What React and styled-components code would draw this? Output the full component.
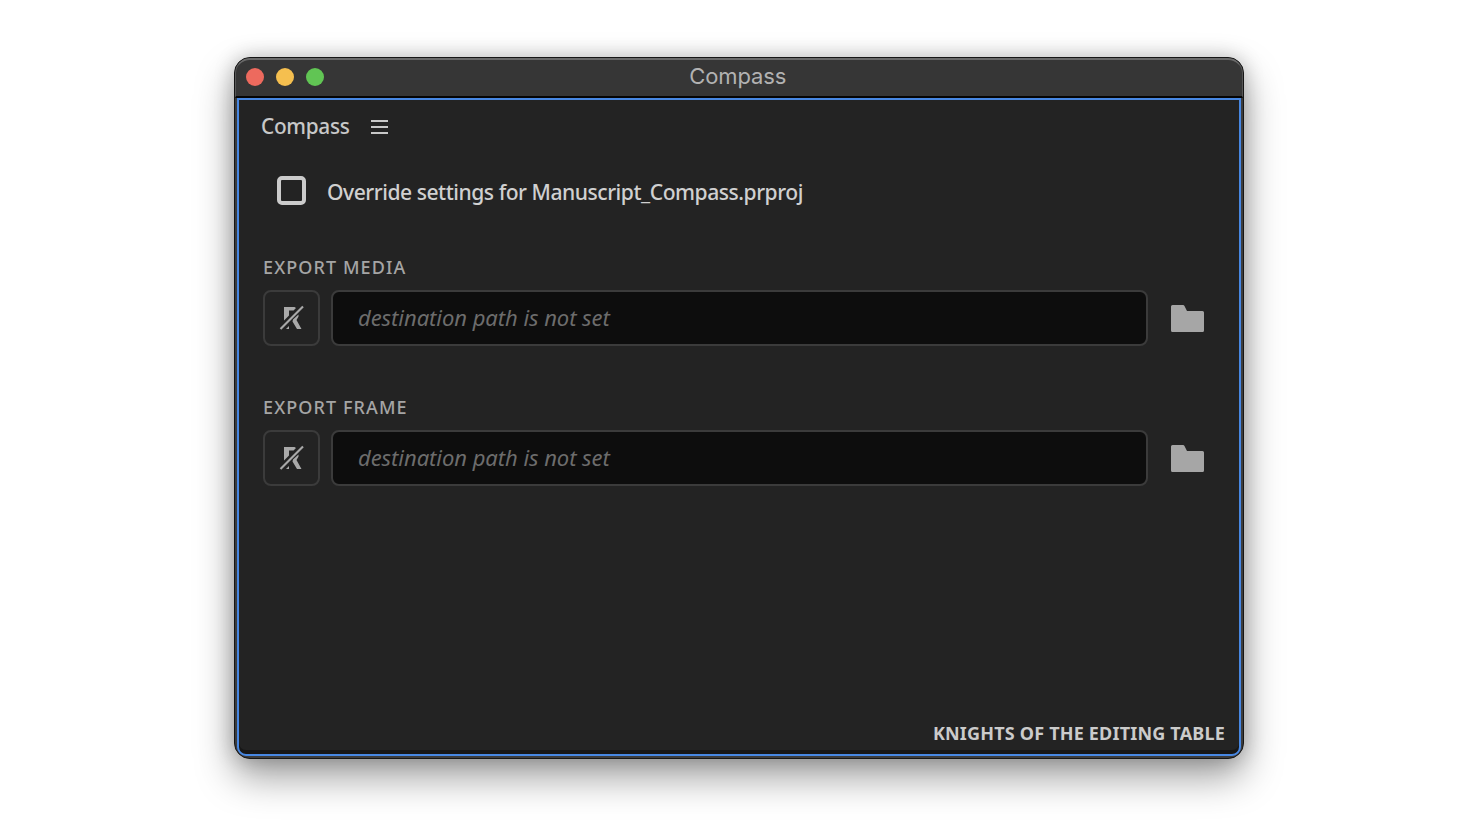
import React from "react";
import styled, { createGlobalStyle } from "styled-components";

const GlobalStyle = createGlobalStyle`
  * { box-sizing: border-box; }
  body { margin: 0; background: #fff; font-family: "Noto Sans", "Open Sans", sans-serif; }
`;

const Desktop = styled.main`
  display: flex;
  justify-content: center;
  align-items: flex-start;
  height: 832px;
  padding: 57px 1px 0 0;
  overflow: hidden;
  background: #fff;
`;

const Window = styled.section`
  display: flex;
  flex-direction: column;
  width: 1010px;
  height: 702px;
  border: 1px solid #151515;
  border-radius: 16px;
  overflow: hidden;
  background: #3c3c3c;
  box-shadow: 0 18px 38px rgba(0, 0, 0, 0.38), 0 0 20px rgba(0, 0, 0, 0.22);
`;

const TitleBar = styled.header`
  display: grid;
  grid-template-columns: 1fr auto 1fr;
  align-items: center;
  height: 40px;
  padding: 0 10px 3px 9.5px;
  border: 1px solid #575757;
  border-top: 2px solid #696969;
  border-bottom: 2px solid #050505;
  border-radius: 15px 15px 0 0;
  background: #363636;
`;

const Lights = styled.div`
  display: flex;
  gap: 12px;
`;

const Light = styled.i`
  width: 18px;
  height: 18px;
  border-radius: 50%;
  background: ${(p) => p.$color};
`;

const WindowTitle = styled.span`
  margin: -2px 1px 0 -1px;
  font: 400 22px/30px Inter, sans-serif;
  letter-spacing: -0.1px;
  color: #b2b2b2;
`;

const Panel = styled.div`
  flex: 1;
  display: flex;
  flex-direction: column;
  margin: 0 2px 2px;
  border: 2px solid #4787e2;
  border-radius: 0 0 9px 9px;
  padding: 0 14px 0 24px;
  background: #232323;
  box-shadow: inset 0 -4px 0 #171717;
`;

const PanelHeader = styled.div`
  display: flex;
  align-items: center;
  gap: 16px;
  height: 50px;
  margin: 0 0 2px -2px;
`;

const PanelTitle = styled.h1`
  margin: 0;
  font-size: 22px;
  font-weight: 500;
  line-height: 30px;
  letter-spacing: -0.3px;
  transform: scaleX(0.945);
  transform-origin: left;
  color: #c8c8c8;
`;

const MenuIcon = styled.svg`
  display: block;
  width: 17px;
  height: 14px;
  margin-top: 4px;
`;

const Override = styled.label`
  display: flex;
  align-items: center;
  gap: 21px;
  height: 32px;
  margin: 22px 0 0 14px;
  font-size: 22px;
  font-weight: 500;
  letter-spacing: -0.5px;
  white-space: nowrap;
  color: #d0d0d0;
`;

const OverrideText = styled.span`
  padding-top: 2px;
  transform: scaleX(0.959);
  transform-origin: left;
`;

const Box = styled.span`
  width: 29px;
  height: 29px;
  border: 4px solid #cbcbcb;
  border-radius: 5px;
`;

const Group = styled.section`
  margin-top: ${(p) => p.$top}px;
`;

const GroupTitle = styled.h2`
  margin: 0 0 10px;
  font-size: 18px;
  font-weight: 500;
  line-height: 26px;
  letter-spacing: 1.1px;
  color: #a5a5a5;
`;

const Row = styled.div`
  display: flex;
  align-items: center;
`;

const Toggle = styled.button`
  display: flex;
  align-items: center;
  justify-content: center;
  width: 57px;
  height: 56px;
  padding: 0;
  border: 2px solid #3b3b3b;
  border-radius: 8px;
  background: #232323;
`;

const PathField = styled.div`
  display: flex;
  align-items: center;
  width: 817px;
  height: 56px;
  margin: 0 23px 0 11px;
  padding: 0 25px 3px;
  border: 2px solid #3b3b3b;
  border-radius: 8px;
  background: #0d0d0d;
  font-size: 22px;
  font-style: italic;
  letter-spacing: -0.05px;
  color: #6c6c6c;
`;

const Footer = styled.footer`
  margin-top: auto;
  padding-bottom: 8px;
  text-align: right;
  font-size: 18px;
  font-weight: 700;
  line-height: 26px;
  letter-spacing: 0.19px;
  color: #cbcbcb;
`;

const RelativeOff = () => (
  <svg width="26" height="26" viewBox="0 0 26 26">
    <path d="M5 2H15.5L17 3L14.5 5.5H10V10.5L5 15.5Z" fill="#a9a9a9" />
    <path d="M14 14.5L19.5 9.5V11.5L17.5 15L22.5 24H18L13.5 16.5Z" fill="#a9a9a9" />
    <path d="M7 24L10 21V24Z" fill="#a9a9a9" />
    <path d="M1.5 24L24 1.5" stroke="#a9a9a9" strokeWidth="2.2" />
  </svg>
);

const Folder = () => (
  <svg width="33" height="27" viewBox="0 0 33 27">
    <path d="M1.5 0H12Q13 0 13.5 1L16 6H31.5Q33 6 33 7.5V25.5Q33 27 31.5 27H1.5Q0 27 0 25.5V1.5Q0 0 1.5 0Z" fill="#a6a6a6" />
  </svg>
);

const ExportGroup = ({ title, top }) => (
  <Group $top={top}>
    <GroupTitle>{title}</GroupTitle>
    <Row>
      <Toggle aria-label="Relative path off"><RelativeOff /></Toggle>
      <PathField>destination path is not set</PathField>
      <Folder />
    </Row>
  </Group>
);

export default function App() {
  return (
    <Desktop>
      <GlobalStyle />
      <Window>
        <TitleBar>
          <Lights>
            <Light $color="#ed6a5e" />
            <Light $color="#f5bf4f" />
            <Light $color="#61c554" />
          </Lights>
          <WindowTitle>Compass</WindowTitle>
        </TitleBar>
        <Panel>
          <PanelHeader>
            <PanelTitle>Compass</PanelTitle>
            <MenuIcon viewBox="0 0 17 14">
              <path d="M0 1H17M0 7H17M0 13H17" stroke="#c8c8c8" strokeWidth="1.8" />
            </MenuIcon>
          </PanelHeader>
          <Override>
            <Box />
            <OverrideText>Override settings for Manuscript_Compass.prproj</OverrideText>
          </Override>
          <ExportGroup title="EXPORT MEDIA" top={48} />
          <ExportGroup title="EXPORT FRAME" top={48} />
          <Footer>KNIGHTS OF THE EDITING TABLE</Footer>
        </Panel>
      </Window>
    </Desktop>
  );
}
